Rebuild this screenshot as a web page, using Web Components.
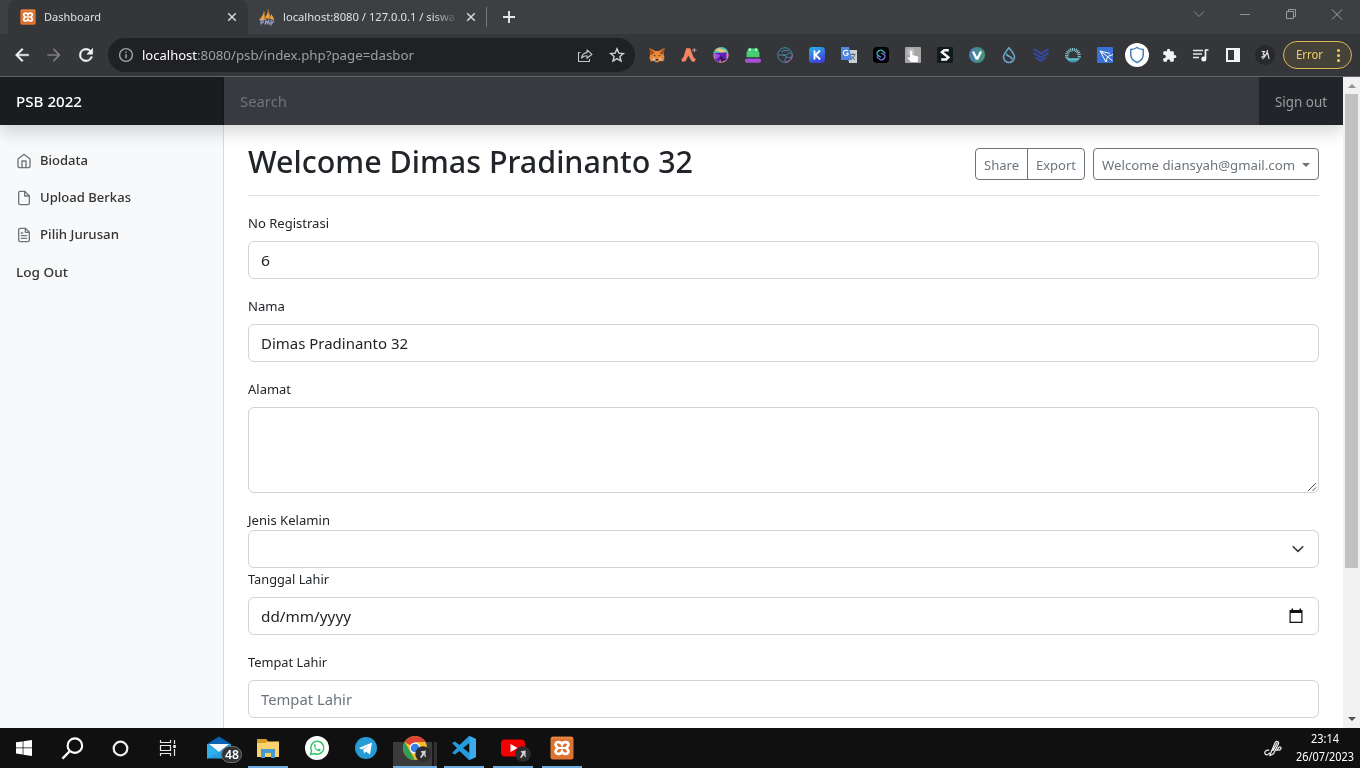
<!DOCTYPE html>
<html lang="id">
<head>
<meta charset="utf-8">
<title>Dashboard</title>
<style>
html,body{margin:0;height:100%;overflow:hidden}
body{font-family:"Noto Sans","Open Sans",sans-serif;color:#212529;background:#fff}
</style>
</head>
<body>
<desktop-screen>
  <browser-tabs slot="top"></browser-tabs>
  <browser-toolbar slot="top"></browser-toolbar>
  <page-view slot="page">
    <page-header slot="header"></page-header>
    <side-bar slot="side">
      <nav-item icon="home"><fit-text w="48" s="13.2" b="550">Biodata</fit-text></nav-item>
      <nav-item icon="file"><fit-text w="91" s="13.2" b="550">Upload Berkas</fit-text></nav-item>
      <nav-item icon="filetext"><fit-text w="79" s="13.2" b="550">Pilih Jurusan</fit-text></nav-item>
      <nav-item><fit-text w="52" s="13.2" b="550">Log Out</fit-text></nav-item>
    </side-bar>
    <page-title>
      <fit-text w="445" s="31.5" b="500">Welcome Dimas Pradinanto 32</fit-text>
    </page-title>
    <form-field><fit-text slot="label" w="81" s="13.3">No Registrasi</fit-text><fit-text w="9" s="15.2">6</fit-text></form-field>
    <form-field><fit-text slot="label" w="37" s="13.3">Nama</fit-text><fit-text w="147" s="15.2">Dimas Pradinanto 32</fit-text></form-field>
    <form-field kind="area"><fit-text slot="label" w="43" s="13.3">Alamat</fit-text></form-field>
    <form-field kind="select"><fit-text slot="label" w="82" s="13.3">Jenis Kelamin</fit-text><ui-icon slot="end" name="chevron" w="16" h="16"></ui-icon></form-field>
    <form-field kind="date"><fit-text slot="label" w="81" s="13.3">Tanggal Lahir</fit-text><fit-text w="90" s="15.2">dd/mm/yyyy</fit-text><ui-icon slot="end" name="calendar" w="20" h="20"></ui-icon></form-field>
    <form-field kind="empty"><fit-text slot="label" w="79" s="13.3">Tempat Lahir</fit-text><fit-text w="91" s="15.2">Tempat Lahir</fit-text></form-field>
  </page-view>
  <task-bar slot="bottom"></task-bar>
</desktop-screen>

<script>
const define = (tag, html, setup) => {
  const t = document.createElement('template');
  t.innerHTML = html;
  customElements.define(tag, class extends HTMLElement {
    constructor() {
      super();
      this.attachShadow({mode: 'open'}).append(t.content.cloneNode(true));
    }
    connectedCallback() { if (setup) setup(this, this.shadowRoot); }
  });
};

const xampp = `<rect x=".5" y=".5" width="23" height="23" rx="2.500" fill="#de7330"/><path d="M2 2h20" stroke="#eda878" stroke-width="1" stroke-dasharray="2 1"/><path d="M12 8.300C10.500 4.800 4.300 5.800 5.800 9.500 6.300 10.700 7.500 11 7.500 12S6.300 13.300 5.800 14.500C4.300 18.200 10.500 19.200 12 15.700 13.500 19.200 19.700 18.200 18.200 14.500 17.700 13.300 16.500 13 16.500 12S17.700 10.700 18.200 9.500C19.700 5.800 13.500 4.800 12 8.300z" fill="none" stroke="#fff" stroke-width="2.700"/><path d="M8 12h8" stroke="#fff" stroke-width="2"/>`;

const ICONS = {
  home:['24',`<g fill="none" stroke="#727476" stroke-width="2" stroke-linecap="round" stroke-linejoin="round"><path d="M3 9l9-7 9 7v11a2 2 0 0 1-2 2H5a2 2 0 0 1-2-2z"/><path d="M9 22V12h6v10"/></g>`],
  file:['24',`<g fill="none" stroke="#727476" stroke-width="2" stroke-linecap="round" stroke-linejoin="round"><path d="M13 2H6a2 2 0 0 0-2 2v16a2 2 0 0 0 2 2h12a2 2 0 0 0 2-2V9z"/><path d="M13 2v7h7"/></g>`],
  filetext:['24',`<g fill="none" stroke="#727476" stroke-width="2" stroke-linecap="round" stroke-linejoin="round"><path d="M14 2H6a2 2 0 0 0-2 2v16a2 2 0 0 0 2 2h12a2 2 0 0 0 2-2V8z"/><path d="M14 2v6h6M16 13H8M16 17H8M10 9H8"/></g>`],
  chevron:['16',`<path d="M3.200 5.700L8 10.400l4.800-4.700" fill="none" stroke="#343a40" stroke-width="1.600" stroke-linecap="round" stroke-linejoin="round"/>`],
  calendar:['20',`<path d="M3.500 4h2V2.500h1.500V4h6.500V2.500H15V4h1.500v13h-13zM4.700 7v8.800h10.600V7z" fill="#111" fill-rule="evenodd"/>`],
  back:['24',`<path d="M20 11H7.830l5.590-5.590L12 4l-8 8 8 8 1.410-1.410L7.830 13H20z" fill="#f1f3f4" stroke="#f1f3f4" stroke-width=".5"/>`],
  fwd:['24',`<path d="M12 4l-1.410 1.410L16.170 11H4v2h12.170l-5.580 5.590L12 20l8-8z" fill="#7d7e81"/>`],
  reload:['24',`<path d="M17.650 6.350A7.960 7.960 0 0 0 12 4a8 8 0 1 0 7.730 10h-2.080A6 6 0 1 1 12 6c1.660 0 3.140.69 4.220 1.780L13 11h7V4z" fill="#f1f3f4" stroke="#f1f3f4" stroke-width=".6"/>`],
  info:['16',`<circle cx="8" cy="8" r="6.400" fill="none" stroke="#a4a7ab" stroke-width="1.400"/><path d="M8 7.200v4M8 4.500v1.400" stroke="#a4a7ab" stroke-width="1.500"/>`],
  share:['16',`<path d="M3.500 5.500h-2v9h11V12M4.500 11C5 7.500 7 5.800 10 5.600V3l5 4.300-5 4V8.700C7.500 8.700 6 9.500 4.500 11z" fill="none" stroke="#c4c6c9" stroke-width="1.100" stroke-linejoin="round"/>`],
  star:['16',`<path d="M8 1.800l1.800 4.300 4.600.4-3.500 3 1.100 4.500L8 11.600 4 14l1.100-4.500-3.500-3 4.600-.4z" fill="none" stroke="#d0d2d4" stroke-width="1.400"/>`],
  x:['16',`<path d="M4.200 4.200l7.600 7.600M11.800 4.200l-7.600 7.600" stroke="#d6d9dc" stroke-width="1.500"/>`],
  plus:['16',`<path d="M8 2v12M2 8h12" stroke="#e4e6e8" stroke-width="1.900"/>`],
  down:['16',`<path d="M3 5.500l5 5 5-5" fill="none" stroke="#888b8e"/>`],
  min:['16',`<path d="M3 8.500h10" stroke="#8e9194"/>`],
  max:['16',`<path d="M3.500 5.500h7v7h-7zM5.500 5.500v-2h7v7h-2" fill="none" stroke="#999c9f"/>`],
  close:['16',`<path d="M3 3.500l10 10M13 3.500l-10 10" stroke="#a3a5a8"/>`],
  xampp:['24',xampp],
  pma:['16',`<path d="M0 11C3 8 4.500 5 5 2l2 9zM6 9C8 6 9 3 9 0l3 10zM11 10l1-5c1.500 1.500 2.500 3 3 6z" fill="#efa33a"/><path d="M5 2l1 9M9 0l2 10" stroke="#92683a" stroke-width=".7"/><path d="M1 11.500h3v2H2v2M6 15.500l1-4 1.500 3 1-3 1 4M12 11v4.500l3-4" fill="none" stroke="#9797c3" stroke-width="1.300"/>`],
  fox:['16',`<path d="M.5 1l5.700 3h3.600l5.700-3-.8 6 .8 4-1.300 3.500-3.500-.8-1 1.500H6.300l-1-1.500-3.500.8L.5 11l.8-4z" fill="#e98836"/><path d="M.5 1l5.200 5-4 2zM15.500 1l-5.200 5 4 2z" fill="#a64c1c"/><path d="M4.500 8l2 .3-.5 1.200zM11.500 8l-2 .3.500 1.200zM6.500 12h3l.3 1.500H6.200z" fill="#27252e"/><path d="M5 10l1.500 2L6 14l-3-.2zM11 10l-1.500 2 .5 2 3-.2z" fill="#d9b9a0"/>`],
  argent:['16',`<path d="M5.200 1.300h4l3.300 9 2.300 2-1.300 2.400-2.700-.2L7.300 8.500 4.500 14.300l-3.500.4-.5-2.400 2-2z" fill="#f58660"/><path d="M13.300 1v4.400M11.100 3.200h4.400" stroke="#c5aaa3" stroke-width=".9"/>`],
  prism:['16',`<circle cx="8" cy="8" r="7.700" fill="#d78ab0"/><path d="M.5 6a7.700 7.700 0 0 1 14.800-.3L8 6z" fill="#48c4ad"/><path d="M2 3l4-2 8 3-5 2z" fill="#ecc27c"/><path d="M1.500 6l12-.5v7.200L10 10.500 5.500 15l-3-2z" fill="#5f1fbc"/><path d="M1.500 6l6 2.500-5 4.500z" fill="#a44be8"/><path d="M13.500 12.700L7 8.500l1 6.500z" fill="#321552"/>`],
  frog:['16',`<path d="M2.600 3.500a2.500 2.500 0 0 1 4.300-1.900h2.200a2.500 2.500 0 0 1 4.300 1.900L14.500 6v4.500h-13V6z" fill="#48cd75"/><circle cx="4.900" cy="2.800" r="1.100" fill="#cffadf"/><circle cx="11.100" cy="2.800" r="1.100" fill="#cffadf"/><path d="M0 10.500h16v1H0z" fill="#292438"/><rect y="11.500" width="16" height="4.300" rx="1.700" fill="#a451d8"/>`],
  orbit:['16',`<circle cx="8" cy="8" r="7.300" fill="none" stroke="#3c8da0" stroke-width="1"/><path d="M1.500 8h8c2-3 4-2 5-1M6 8c3 0 4 4 8 2M4 5c3-2 6-2 8-1M9 10c0 2-1 3-2 4" fill="none" stroke="#508dac"/><path d="M15.300 8A7.300 7.300 0 0 1 8 15.300" fill="none" stroke="#b95fc0"/>`],
  k:['16',`<defs><linearGradient id="g" x2=".4" y2="1"><stop stop-color="#2ab5ee"/><stop offset="1" stop-color="#3c43d6"/></linearGradient></defs><rect width="16" height="16" rx="3.500" fill="url(#g)"/><path d="M5.500 3.500v9M11 3.500L6.500 8l4.700 4.500" fill="none" stroke="#fff" stroke-width="1.900"/>`],
  trans:['16',`<path d="M6 3h10v13H8z" fill="#cdd0d2"/><path d="M0 0h8l3 13H0z" fill="#4d86df"/><path d="M7.300 6.300H5M7 4.300a2.600 2.600 0 1 0 .4 2.200" fill="none" stroke="#fff" stroke-width="1.100"/><path d="M9.500 7.500h5M12 6v1.500M10.500 12c2-1 3-2.500 3-4.500M10.500 9l3.500 4" fill="none" stroke="#607078"/>`],
  sigma:['16',`<rect width="16" height="16" rx="4" fill="#000"/><path d="M12.300 6.500L9 3.300C6.500 2.500 4 4.500 4 6.800c0 1.500 1.500 2.200 4 3.200" fill="none" stroke="#39b4d2" stroke-width="1.300"/><path d="M3.700 9.500L7 12.700c2.500.8 5-1.200 5-3.500 0-1.500-1.500-2.200-4-3.200" fill="none" stroke="#7b79e0" stroke-width="1.300"/>`],
  hand:['16',`<rect width="16" height="16" rx="1" fill="#a6a6a6"/><circle cx="6" cy="5" r="3.700" fill="#bdbdbd"/><path d="M5 4.500a1.200 1.200 0 0 1 2.300 0V8l4.700 1.200c1.300.3 1.500 1.300 1.200 2.500L12.500 15H6l-3.500-4 .8-1L5 11z" fill="#fff"/>`],
  sblack:['16',`<rect width="16" height="16" rx="1" fill="#101b1e"/><path d="M11.800 3.200H7.200L5 5.200l6.300 5.200-2.300 2.200H4.200" fill="none" stroke="#f6f8f5" stroke-width="2.500"/>`],
  v:['16',`<defs><linearGradient id="g"><stop stop-color="#467ab3"/><stop offset="1" stop-color="#479876"/></linearGradient></defs><circle cx="8" cy="8" r="8" fill="url(#g)"/><path d="M4 4.500l3.500 7h1L12 4.500" fill="none" stroke="#fff" stroke-width="2.300"/>`],
  drop:['16',`<path d="M8 .8C11.500 5 13.500 7.500 13.500 10a5.500 5.500 0 0 1-11 0C2.500 7.500 4.500 5 8 .8z" fill="none" stroke="#69a5c9" stroke-width="1.600"/><path d="M5.300 6.500c0 3.500 5.700 2 5.700 6" fill="none" stroke="#69a5c9" stroke-width="1.700"/>`],
  wings:['16',`<path d="M.5 2l7.500 4.500L15.500 2M.5 6L8 10.500 15.500 6M3 10.500L8 14l5-3.500" fill="none" stroke="#354aa3" stroke-width="2"/>`],
  sun:['16',`<path d="M2.200 11a6.200 6.200 0 1 1 11.600 0" fill="none" stroke="#7fc3cd" stroke-width="3.300" stroke-dasharray="1.100 .7"/><path d="M1 11h14c-3 6-11 6-14 0z" fill="#3f9cae"/><path d="M2 12.300h12" stroke="#93d4da" stroke-width=".7"/>`],
  kite:['16',`<rect width="16" height="16" rx="1" fill="#3971d5"/><path d="M3 4l10 2.500M3 4l6 11 1.500-5.500L16 7.500M3 4l7.500 5.500L15.500 14" fill="none" stroke="#fff" stroke-width="1"/>`],
  shield:['24',`<circle cx="12" cy="12" r="12" fill="#fff"/><path d="M12 4.500c2 1.500 4 2 6.200 2v5.500c0 3.500-3 6-6.200 7.500-3.200-1.500-6.200-4-6.200-7.500V6.500c2.200 0 4.200-.5 6.200-2z" fill="none" stroke="#437cb9" stroke-width="1.500"/>`],
  puzzle:['24',`<path d="M20.500 11H19V7a2 2 0 0 0-2-2h-4V3.500a2.500 2.500 0 0 0-5 0V5H4a2 2 0 0 0-2 2v3.800h1.500a2.700 2.700 0 0 1 0 5.400H2V20a2 2 0 0 0 2 2h3.800v-1.500a2.700 2.700 0 0 1 5.400 0V22H17a2 2 0 0 0 2-2v-4h1.500a2.500 2.500 0 0 0 0-5z" fill="#f1f3f4"/>`],
  music:['16',`<path d="M0 3.500h10M0 7h9M0 10.500h6" stroke="#e4e6e8" stroke-width="1.400"/><path d="M12.500 2.500v9M12 3h3.500" stroke="#f1f3f4" stroke-width="1.700"/><circle cx="10.800" cy="12" r="2.500" fill="#f1f3f4"/>`],
  panel:['16',`<path d="M1 1h14v14H1zM3 3v10h6V3z" fill="#f1f3f4" fill-rule="evenodd"/>`],
  profile:['20',`<circle cx="10" cy="10" r="10" fill="#28292b"/><path d="M6.500 6.500h3l-1.500 2.300 1.800 1.500-3.500 2.200M12.500 5c-.5 4-2 6.500-5 9M10.500 9.500l2.500-.5 1 5M12 6l.8 3.500" fill="none" stroke="#ddd" stroke-width="1.200"/>`],
  windows:['16',`<path d="M0 2.300l6.700-.9v6.100H0zM7.400 1.300L16 0v7.500H7.400zM0 8.300h6.700v6.200L0 13.600zM7.400 8.300H16V16l-8.600-1.300z" fill="#fff"/>`],
  search:['24',`<circle cx="14.500" cy="9" r="7.600" fill="none" stroke="#fff" stroke-width="2.200"/><path d="M9.300 14.600L1.500 22.500" stroke="#fff" stroke-width="2.500"/>`],
  cortana:['16',`<circle cx="8" cy="8" r="6.400" fill="none" stroke="#eee" stroke-width="2.100"/>`],
  taskview:['16',`<path d="M.5 0v2.500h10V0M.5 16v-2.500h10V16M.5 5.500h10v5H.5zM14.500 0v4M14.500 9v7" fill="none" stroke="#e8e8e8" stroke-width="1.200"/><path d="M13.300 5h2.400v3h-2.400z" fill="#fff"/>`],
  mail:['24',`<path d="M0 8L12 .5 24 8z" fill="#0863b0"/><path d="M0 8h24v14.500H0z" fill="#279fdf"/><path d="M2 8h20l-10 8z" fill="#f4f8fa"/><path d="M0 8l12 8.500L0 22.500z" fill="#30afea"/>`],
  folder:['24',`<path d="M1 3h9l2 2.500h11V21H1z" fill="#f8d26c"/><path d="M1 3h9l2 2.500L9 7H1z" fill="#d49b2b"/><path d="M5 13h14v9h-4v-5H9v5H5z" fill="#4798cf"/>`],
  whatsapp:['24',`<circle cx="12" cy="12" r="12" fill="#fff"/><path d="M5.500 18.500l1-3.800A6.500 6.500 0 1 1 9.300 17.500z" fill="none" stroke="#39c26d" stroke-width="1.500"/><path d="M9 8.500l1-.5 1 2-.8 1c.6 1.200 1.400 2 2.600 2.500l1-1 2 1-.3 1.200c-2 2-7-2-6.500-6.200z" fill="#39c26d"/>`],
  telegram:['24',`<circle cx="12" cy="12" r="11" fill="#279bd5"/><path d="M5 12l13-5.500-2 12-4-3-2 2-.8-4 6-4-7.500 4z" fill="#fff"/>`],
  chrome:['24',`<circle cx="12" cy="12" r="12" fill="#f8bd2a"/><path d="M12 12L1.600 6A12 12 0 0 1 22.400 6H12z" fill="#dc4437"/><path d="M1.600 6L7 15l5 9A12 12 0 0 1 1.600 6z" fill="#329d56"/><circle cx="12" cy="12" r="5.500" fill="#fff"/><circle cx="12" cy="12" r="4.300" fill="#397ee6"/>`],
  badge:['20',`<circle cx="10" cy="10" r="9.700" fill="#2d2d2e"/><path d="M7 6.500l6.500-1-.5 5.500 1 2-1.500 1-1.200-3.200L8 15l-1.800-.5L9 9.500z" fill="#cfcfcf"/>`],
  vscode:['24',`<path d="M17 0l7 3v18l-7 3-9.500-9L3 18.500 0 17l5-5-5-5 3-1.500L7.500 9zM17.500 7L11 12l6.500 5z" fill="#259bdc" fill-rule="evenodd"/><path d="M17.500 0L24 3v18l-6.500 3z" fill="#3badec"/>`],
  youtube:['24',`<rect y="3.500" width="24" height="17" rx="4" fill="#f50000"/><path d="M9.500 8l7 4-7 4z" fill="#fff"/>`],
  pen:['16',`<path d="M4.500 9.500c-3-.5-4.500 1.500-3.500 3 1.200 1.800 3.500 0 3.700-1M5 13.500L9.500 2.800c1-1.700 3.300-.7 2.700 1.300L8 12.500l-3 1.500zM7.500 10l3.700-7M10.500 10l2-3c1-1 2.500 0 1.500 1.500-.6.900-2 .9-3 .5" fill="none" stroke="#f1f1f1" stroke-width="1"/>`],
  grip:['16',`<path d="M6 14l8-8M10.500 14l3.500-3.500" stroke="#555" stroke-width="1"/>`]
};

define('ui-icon', `<style>:host{display:block;flex:none;line-height:0}svg{display:block;overflow:visible}</style><svg></svg>`, (el, r) => {
  const [box, body] = ICONS[el.getAttribute('name')];
  const svg = r.querySelector('svg');
  svg.setAttribute('viewBox', `0 0 ${box} ${box}`);
  svg.setAttribute('width', el.getAttribute('w') || 16);
  svg.setAttribute('height', el.getAttribute('h') || el.getAttribute('w') || 16);
  svg.innerHTML = body;
});

define('desktop-screen', `<style>
:host{display:grid;grid-template-rows:77px 651px 40px;width:1360px;height:768px;overflow:hidden}
div{min-height:0}
.top{display:flex;flex-direction:column;background:#35363a;border-bottom:1px solid #626366;box-sizing:border-box}
</style><div class="top"><slot name="top"></slot></div><div><slot name="page"></slot></div><div><slot name="bottom"></slot></div>`);

define('browser-tabs', `<style>
:host{display:flex;height:34px;background:#3c4043;color:#dee1e4;padding-left:8px}
.tab{display:flex;align-items:center;box-sizing:border-box;width:240px;height:34px;padding:0 8px 0 12px;gap:8px}
.on{background:#35363a;border-radius:8px 8px 0 0}
.two{width:239px;padding-left:11px}
.t{flex:1;overflow:hidden;height:20px;line-height:20px}
.two .t{-webkit-mask:linear-gradient(90deg,#000 150px,transparent 176px)}
.sep{width:1px;height:20px;margin:7px 14px 0 -1px;background:#77797c}
.new{align-self:center}
.win{margin-left:auto;display:flex;gap:30px;padding:6px 15px 0 0}
</style>
<div class="tab on"><ui-icon name="xampp" w="16"></ui-icon><div class="t"><fit-text w="57" s="11.6">Dashboard</fit-text></div><ui-icon name="x" w="16"></ui-icon></div>
<div class="tab two"><ui-icon name="pma" w="16"></ui-icon><div class="t"><fit-text w="172" s="11.6">localhost:8080 / 127.0.0.1 / siswa</fit-text></div><ui-icon name="x" w="16"></ui-icon></div>
<div class="sep"></div><ui-icon class="new" name="plus" w="16"></ui-icon>
<div class="win"><ui-icon name="down"></ui-icon><ui-icon name="min"></ui-icon><ui-icon name="max"></ui-icon><ui-icon name="close"></ui-icon></div>`);

define('browser-toolbar', `<style>
:host{display:flex;align-items:center;height:42px;padding:0 8px 0 12px;box-sizing:border-box;color:#9aa0a6}
.nav{display:flex;gap:12px;width:96px}
.url{display:flex;align-items:center;box-sizing:border-box;width:527px;height:34px;border-radius:17px;background:#202124;padding:0 10px;line-height:20px}
.url fit-text:first-of-type{margin-left:8px;color:#fff}
.acts{display:flex;gap:16px;margin-left:auto}
.ext{display:grid;grid-template-columns:repeat(20,32px);place-items:center;margin-left:6px;height:32px}
.err{display:flex;align-items:center;justify-content:space-between;box-sizing:border-box;width:69px;height:28px;border:1px solid #dcb85a;border-radius:14px;background:#45423a;color:#f4cd68;padding:0 11px 0 12px;margin-left:auto;line-height:20px}
.dots{display:grid;gap:2px}.dots i{width:3px;height:3px;border-radius:50%;background:#f4cd68}
</style>
<div class="nav"><ui-icon name="back" w="20"></ui-icon><ui-icon name="fwd" w="20"></ui-icon><ui-icon name="reload" w="20"></ui-icon></div>
<div class="url"><ui-icon name="info" w="16"></ui-icon><fit-text w="55" s="13.4">localhost</fit-text><fit-text w="217" s="13.4">:8080/psb/index.php?page=dasbor</fit-text><div class="acts"><ui-icon name="share"></ui-icon><ui-icon name="star"></ui-icon></div></div>
<div class="ext"></div>
<div class="err"><fit-text w="27" s="12">Error</fit-text><span class="dots"><i></i><i></i><i></i></span></div>`, (el, r) => {
  const sizes = {shield:24, puzzle:15, profile:20};
  r.querySelector('.ext').innerHTML = 'fox argent prism frog orbit k trans sigma hand sblack v drop wings sun kite shield puzzle music panel profile'
    .split(' ').map(n => `<ui-icon name="${n}" w="${sizes[n] || 16}"></ui-icon>`).join('');
});

define('page-view', `<style>
:host{display:grid;grid-template-columns:1343px 17px;height:651px;overflow:hidden;background:#fff}
.doc{display:grid;grid-template:48px 603px / 224px 1fr;min-width:0}
.head{grid-column:1/3;position:relative;z-index:1;box-shadow:0 8px 16px rgba(0,0,0,.15)}
main{padding:0 24px;overflow:hidden}
scroll-bar{position:relative;z-index:2}
</style><div class="doc"><div class="head"><slot name="header"></slot></div><slot name="side"></slot><main><slot></slot></main></div><scroll-bar></scroll-bar>`);

define('scroll-bar', `<style>
:host{display:flex;flex-direction:column;align-items:center;background:#f1f1f1;height:651px}
i{display:block;border:4px solid transparent}
.u{border-top:0;border-bottom:4px solid #939393;margin:7px 0 6px}
.thumb{width:13px;height:474px;background:#c1c1c1}
.d{border-bottom:0;border-top:4px solid #505050;margin:auto 0 7px}
</style><i class="u"></i><div class="thumb"></div><i class="d"></i>`);

define('page-header', `<style>
:host{display:flex;height:48px;background:#212529;line-height:24px}
div{padding:12px 16px;box-sizing:border-box;height:48px}
.b{width:224px;background:#191d20;color:#fff;border-right:1px solid #15181a}
.s{flex:1;background:#393a3f;color:#6f757a}
.o{width:84px;color:#9b9d9f;background:#212429}
</style><div class="b"><fit-text w="66" s="15.2" b="500">PSB 2022</fit-text></div><div class="s"><fit-text w="47" s="15.2">Search</fit-text></div><div class="o"><fit-text w="52" s="14.6">Sign out</fit-text></div>`);

define('side-bar', `<style>:host{display:block;box-sizing:border-box;background:#f8f9fa;border-right:1px solid #d9dbdd;padding-top:16px;height:603px}</style><slot></slot>`);

define('nav-item', `<style>:host{display:flex;align-items:center;height:37.3px;box-sizing:border-box;padding:1px 16px 0;gap:8px;color:#333;line-height:21px}ui-icon{padding-top:1px}</style><slot></slot>`, (el, r) => {
  const n = el.getAttribute('icon');
  if (n && !r.querySelector('ui-icon')) r.querySelector('slot').insertAdjacentHTML('beforebegin', `<ui-icon name="${n}" w="16"></ui-icon>`);
});

define('page-title', `<style>
:host{display:flex;justify-content:space-between;box-sizing:border-box;height:71px;border-bottom:1px solid #dee2e6;margin-bottom:16px;padding-top:16px;line-height:40px}
.r{display:flex;gap:8px;padding-top:7px;color:#6c757d;line-height:21px}
.btn{display:flex;align-items:center;box-sizing:border-box;height:32px;border:1px solid #6c757d;padding:2px 8px 0;border-radius:4px}
.g{display:flex}.g .btn:first-child{border-radius:4px 0 0 4px}.g .btn:last-child{border-radius:0 4px 4px 0;margin-left:-1px}
i{border:4px solid transparent;border-top-color:#6c757d;border-bottom:0;margin:-1px 0 0 7px}
</style><slot></slot><div class="r"><div class="g"><div class="btn"><fit-text w="35" s="13.3">Share</fit-text></div><div class="btn"><fit-text w="40" s="13.3">Export</fit-text></div></div><div class="btn"><fit-text w="193" s="13.3">Welcome diansyah@gmail.com</fit-text><i></i></div></div>`);

define('form-field', `<style>
:host{display:block;margin-bottom:16px;color:#212529}
.l{height:21px;line-height:22px;margin-bottom:8px}
.c{display:flex;align-items:center;box-sizing:border-box;height:38px;border:1px solid #ced4da;border-radius:6px;padding:0 12px;line-height:24px}
slot[name=end]::slotted(*){margin-left:auto}
:host([kind=select]){margin-bottom:0}
:host([kind=select]) .l{margin-bottom:0}
:host([kind=empty]) .c{color:#6c757d}
.grip{display:none}
:host([kind=area]) .c{height:86px;align-items:flex-end;justify-content:flex-end;padding:0}
:host([kind=area]) .grip{display:block;margin:0 0 -1px}
</style><div class="l"><slot name="label"></slot></div><div class="c"><slot></slot><slot name="end"></slot><ui-icon class="grip" name="grip" w="16"></ui-icon></div>`);

define('task-item', `<style>
:host{display:grid;place-items:center;position:relative;height:40px;width:40px;box-sizing:border-box}
:host([run]){box-shadow:inset 0 -2px #6eaee5}
:host([active]){background:linear-gradient(90deg,#3b3b3b 39px,#171717 39px,#171717 41px,#303030 41px);background-position:0 14px;background-repeat:no-repeat}
::slotted([slot=badge]){position:absolute;left:22px;top:18px}
</style><slot></slot><slot name="badge"></slot>`);

define('task-bar', `<style>
:host{display:flex;height:40px;background:#101010;color:#fff;justify-content:space-between}
.apps{display:grid;grid-template-columns:repeat(4,48px) repeat(8,49px);place-items:center}
task-item:nth-child(n+5){margin-left:5px}
.n{display:grid;place-items:center;width:19px;height:15px;border:1px solid #727577;border-radius:9px;background:#303437;line-height:15px}
.tray{display:flex;align-items:center;gap:12px;padding-right:5px}
.clock{display:grid;justify-items:center;line-height:18px;width:60px}
</style>
<div class="apps">
<task-item><ui-icon name="windows" w="16"></ui-icon></task-item>
<task-item><ui-icon name="search" w="23"></ui-icon></task-item>
<task-item><ui-icon name="cortana" w="17"></ui-icon></task-item>
<task-item><ui-icon name="taskview" w="16"></ui-icon></task-item>
<task-item><ui-icon name="mail" w="24"></ui-icon><div class="n" slot="badge"><fit-text w="14" s="11.8" b="600">48</fit-text></div></task-item>
<task-item run><ui-icon name="folder" w="24"></ui-icon></task-item>
<task-item><ui-icon name="whatsapp" w="24"></ui-icon></task-item>
<task-item><ui-icon name="telegram" w="24"></ui-icon></task-item>
<task-item run active style="width:44px"><ui-icon name="chrome" w="24"></ui-icon><ui-icon slot="badge" name="badge" w="16"></ui-icon></task-item>
<task-item run><ui-icon name="vscode" w="24"></ui-icon></task-item>
<task-item run><ui-icon name="youtube" w="24"></ui-icon><ui-icon slot="badge" name="badge" w="16"></ui-icon></task-item>
<task-item run><ui-icon name="xampp" w="24"></ui-icon></task-item>
</div>
<div class="tray"><ui-icon name="pen" w="19"></ui-icon><div class="clock"><fit-text w="28" s="12">23:14</fit-text><fit-text w="58" s="12">26/07/2023</fit-text></div></div>`);

// Registered last: the text is measured once every container around it has its slots.
define('fit-text', `<style>:host{display:inline-block;white-space:nowrap;flex:none;vertical-align:top}span{display:inline-block;transform-origin:0 50%}</style><span><slot></slot></span>`, (el, r) => {
  const span = r.querySelector('span'), w = +el.getAttribute('w');
  el.style.fontSize = el.getAttribute('s') + 'px';
  el.style.fontWeight = el.getAttribute('b') || 400;
  const natural = span.getBoundingClientRect().width;
  el.style.width = w + 'px';
  if (natural) span.style.transform = `scaleX(${w / natural})`;
});
</script>
</body>
</html>
